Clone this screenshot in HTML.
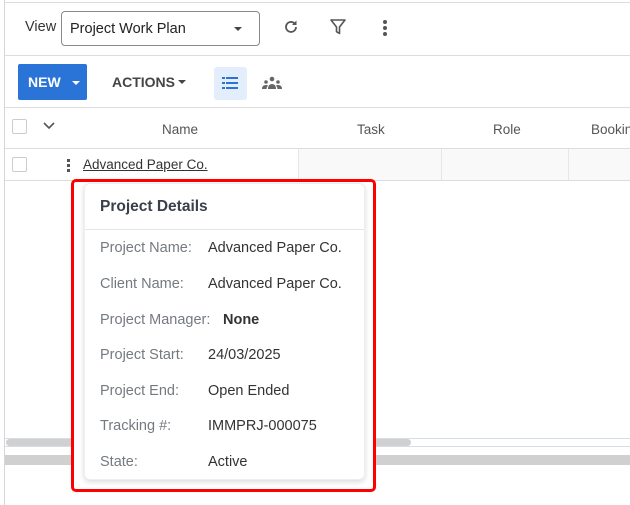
<!DOCTYPE html>
<html><head><style>
*{margin:0;padding:0;box-sizing:border-box}
body{width:630px;height:505px;background:#fff;font-family:"Liberation Sans",sans-serif;position:relative;overflow:hidden;color:#333}
.a{position:absolute}
.t{font-size:14.5px;white-space:nowrap}
.lbl{color:#757a80}
</style></head><body>
<div class="a" style="left:4px;top:0;width:1px;height:505px;background:#d6d6d6"></div>
<div class="a" style="left:4px;top:2px;width:626px;height:1px;background:#ddd"></div>
<div class="a t" style="left:25px;top:19px;color:#333">View</div>
<div class="a" style="left:61px;top:11px;width:199px;height:35px;border:1px solid #8a8a8a;border-radius:4px"></div>
<div class="a t" style="left:70px;top:21px;color:#222">Project Work Plan</div>
<div class="a" style="left:234px;top:27px;border-left:4px solid transparent;border-right:4px solid transparent;border-top:4px solid #444"></div>
<svg class="a" style="left:282px;top:18px" width="18" height="18" viewBox="0 0 18 18"><path d="M14 9a5 5 0 1 1-1.6-3.7" fill="none" stroke="#555" stroke-width="1.8"/><path d="M14.5 2.5v4.5h-4.5z" fill="#555"/></svg>
<svg class="a" style="left:329px;top:18px" width="18" height="18" viewBox="0 0 18 18"><path d="M2 2h14l-5.5 7v6.5l-3-1.8V9z" fill="none" stroke="#555" stroke-width="1.6" stroke-linejoin="round"/></svg>
<div class="a" style="left:383px;top:20px;width:4px;height:4px;border-radius:2px;background:#555;box-shadow:0 6px 0 #555,0 12px 0 #555"></div>
<div class="a" style="left:5px;top:55px;width:625px;height:1px;background:#ddd"></div>
<div class="a" style="left:18px;top:64px;width:69px;height:36px;background:#2a74d8;border-radius:2px"></div>
<div class="a" style="left:28px;top:74px;color:#fff;font-size:14px;font-weight:bold">NEW</div>
<div class="a" style="left:72px;top:81px;border-left:4px solid transparent;border-right:4px solid transparent;border-top:4px solid #fff"></div>
<div class="a t" style="left:112px;top:74px;color:#444;font-weight:bold;font-size:14px">ACTIONS</div>
<div class="a" style="left:178px;top:80px;border-left:4px solid transparent;border-right:4px solid transparent;border-top:4px solid #444"></div>
<div class="a" style="left:214px;top:67px;width:33px;height:33px;background:#e3edfb;border-radius:3px"></div>
<svg class="a" style="left:222px;top:76px" width="17" height="14" viewBox="0 0 17 14"><g fill="#2a74d8"><rect x="0" y="1" width="3" height="2"/><rect x="4" y="1" width="12" height="2"/><rect x="0" y="6" width="3" height="2"/><rect x="4" y="6" width="12" height="2"/><rect x="0" y="11" width="3" height="2"/><rect x="4" y="11" width="12" height="2"/></g></svg>
<svg class="a" style="left:261px;top:76px" width="22" height="14" viewBox="0 0 22 14"><g fill="#666"><circle cx="11" cy="3" r="2.3"/><circle cx="5" cy="6" r="1.8"/><circle cx="17" cy="6" r="1.8"/><path d="M7 13q0-5 4-5t4 5z"/><path d="M1 13q0-4 4-4 1.5 0 2 .5-1.5 1.5-1.5 3.5z"/><path d="M21 13q0-4-4-4-1.5 0-2 .5 1.5 1.5 1.5 3.5z"/></g></svg>
<div class="a" style="left:5px;top:107px;width:625px;height:1px;background:#ddd"></div>
<div class="a" style="left:12px;top:119px;width:15px;height:15px;border:1px solid #ccc;border-radius:2px"></div>
<svg class="a" style="left:43px;top:122px" width="12" height="8" viewBox="0 0 12 8"><path d="M1 1l5 5 5-5" fill="none" stroke="#555" stroke-width="1.6"/></svg>
<div class="a t" style="left:162px;top:122px;color:#555;font-size:13.5px">Name</div>
<div class="a t" style="left:357px;top:122px;color:#555;font-size:13.5px">Task</div>
<div class="a t" style="left:493px;top:122px;color:#555;font-size:13.5px">Role</div>
<div class="a t" style="left:591px;top:122px;color:#555;font-size:13.5px">Bookin</div>
<div class="a" style="left:5px;top:148px;width:625px;height:1px;background:#ddd"></div>
<div class="a" style="left:298px;top:149px;width:332px;height:31px;background:#f9f9f9"></div>
<div class="a" style="left:298px;top:149px;width:1px;height:31px;background:#e6e6e6"></div>
<div class="a" style="left:441px;top:149px;width:1px;height:31px;background:#e6e6e6"></div>
<div class="a" style="left:568px;top:149px;width:1px;height:31px;background:#e6e6e6"></div>
<div class="a" style="left:5px;top:180px;width:625px;height:1px;background:#ddd"></div>
<div class="a" style="left:12px;top:157px;width:15px;height:15px;border:1px solid #ccc;border-radius:2px"></div>
<div class="a" style="left:67px;top:159px;width:3px;height:3px;background:#555;box-shadow:0 5px 0 #555,0 10px 0 #555"></div>
<div class="a t" style="left:83px;top:157px;color:#333;font-size:13.5px;text-decoration:underline">Advanced Paper Co.</div>
<div class="a" style="left:5px;top:438px;width:625px;height:9px;border-top:1px solid #d6dde6;border-bottom:1px solid #d6dde6"></div>
<div class="a" style="left:6px;top:439px;width:405px;height:7px;background:#d0d0d0;border-radius:4px"></div>
<div class="a" style="left:5px;top:455px;width:625px;height:10px;background:#d0d0d0"></div>
<div class="a" style="left:71px;top:179px;width:305px;height:313px;border:3px solid #f00;border-radius:5px;background:#fff"></div>
<div class="a" style="left:84px;top:183px;width:281px;height:297px;background:#fff;border:1px solid #eee;border-radius:6px;box-shadow:0 2px 6px rgba(0,0,0,.15)"></div>
<div class="a t" style="left:100px;top:198px;font-size:15.5px;font-weight:bold;color:#3a3f4a">Project Details</div>
<div class="a" style="left:85px;top:229px;width:279px;height:1px;background:#e6e6e6"></div>
<div class="a t lbl" style="left:100px;top:240px">Project Name:</div><div class="a t" style="left:208px;top:240px">Advanced Paper Co.</div>
<div class="a t lbl" style="left:100px;top:276px">Client Name:</div><div class="a t" style="left:208px;top:276px">Advanced Paper Co.</div>
<div class="a t lbl" style="left:100px;top:312px">Project Manager:</div><div class="a t" style="left:223px;top:312px;font-weight:bold">None</div>
<div class="a t lbl" style="left:100px;top:347px">Project Start:</div><div class="a t" style="left:208px;top:347px">24/03/2025</div>
<div class="a t lbl" style="left:100px;top:383px">Project End:</div><div class="a t" style="left:208px;top:383px">Open Ended</div>
<div class="a t lbl" style="left:100px;top:418px">Tracking #:</div><div class="a t" style="left:208px;top:418px">IMMPRJ-000075</div>
<div class="a t lbl" style="left:100px;top:454px">State:</div><div class="a t" style="left:208px;top:454px">Active</div>
</body></html>
